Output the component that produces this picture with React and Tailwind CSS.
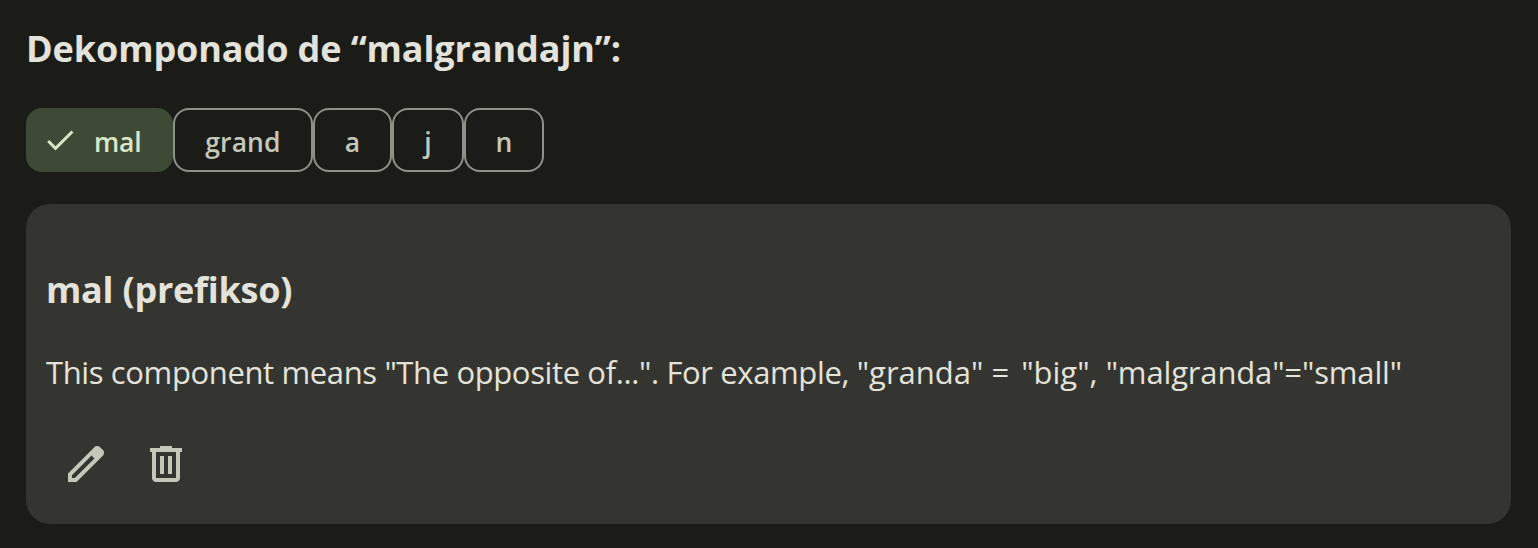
const segments = [
  { label: "grand", size: "w-[140px]" },
  { label: "a", size: "w-[79px]" },
  { label: "j", size: "w-[72px]" },
  { label: "n", size: "w-20" },
];

function CheckIcon() {
  return (
    <svg viewBox="0 0 24 24" className="size-9 shrink-0" fill="#d9e7c8">
      <path d="M9 16.17 4.83 12l-1.42 1.41L9 19 21 7l-1.41-1.41z" />
    </svg>
  );
}

function EditIcon() {
  return (
    <svg viewBox="0 0 24 24" className="size-12" fill="currentColor">
      <path d="M5 19h1.425L16.2 9.225 14.775 7.8 5 17.575V19Zm-2 2v-4.25L16.2 3.575q.3-.275.663-.425.362-.15.762-.15t.775.15q.375.15.65.45L20.425 5q.3.275.438.65.137.375.137.75 0 .4-.137.763-.138.362-.438.662L7.25 21H3ZM19 6.4 17.6 5 19 6.4Zm-3.525 2.125-.7-.725L16.2 9.225l-.725-.7Z" />
    </svg>
  );
}

function DeleteIcon() {
  return (
    <svg viewBox="0 0 24 24" className="size-12" fill="currentColor">
      <path d="M7 21q-.825 0-1.413-.587Q5 19.825 5 19V6H4V4h5V3h6v1h5v2h-1v13q0 .825-.587 1.413Q17.825 21 17 21H7ZM17 6H7v13h10V6ZM9 17h2V8H9v9Zm4 0h2V8h-2v9Z" />
    </svg>
  );
}

export default function App() {
  return (
    <main className="h-[548px] w-[1538px] bg-[#1b1c18] pr-[27px] pl-[26px] pt-6 font-['Open_Sans',sans-serif] text-[#e4e3db]">
      <h3 className="h-[50px] text-[36px] leading-[50px] font-bold tracking-[-0.1px] whitespace-nowrap">
        Dekomponado de “malgrandajn”:
      </h3>
      <div className="mt-[34px] flex h-16 text-[26.5px] font-semibold">
        <button className="flex w-[147px] items-center rounded-2xl bg-[#3e4a36] pl-4 text-[#d9e7c8]">
          <CheckIcon />
          <span className="ml-4 pt-1.5 tracking-[-0.2px]">mal</span>
        </button>
        {segments.map((s) => (
          <button
            key={s.label}
            className={`${s.size} flex items-center justify-center rounded-2xl border-2 border-[#8e9286] pt-1.5 tracking-[0.1px] text-[#c4c8ba]`}
          >
            {s.label}
          </button>
        ))}
      </div>
      <section className="mt-8 h-80 rounded-3xl bg-[#343530] px-5 pt-[61px]">
        <h3 className="h-[50px] text-[36px] leading-[50px] font-bold tracking-[-0.25px] whitespace-nowrap">
          mal (prefikso)
        </h3>
        <p className="mt-9 h-[43px] text-[31px] leading-[43px] whitespace-nowrap">
          <span className="tracking-[-0.375px]">This component means "The opposite of...". For example, </span>
          <span>"granda" </span>
          <span className="tracking-[2px]">= </span>
          <span>"big", </span>
          <span className="tracking-[-0.15px]">"malgranda"="small"</span>
        </p>
        <div className="mt-[46px] flex gap-8 pl-4 text-[#c4c8ba]">
          <button aria-label="Redakti"><EditIcon /></button>
          <button aria-label="Forigi"><DeleteIcon /></button>
        </div>
      </section>
    </main>
  );
}
